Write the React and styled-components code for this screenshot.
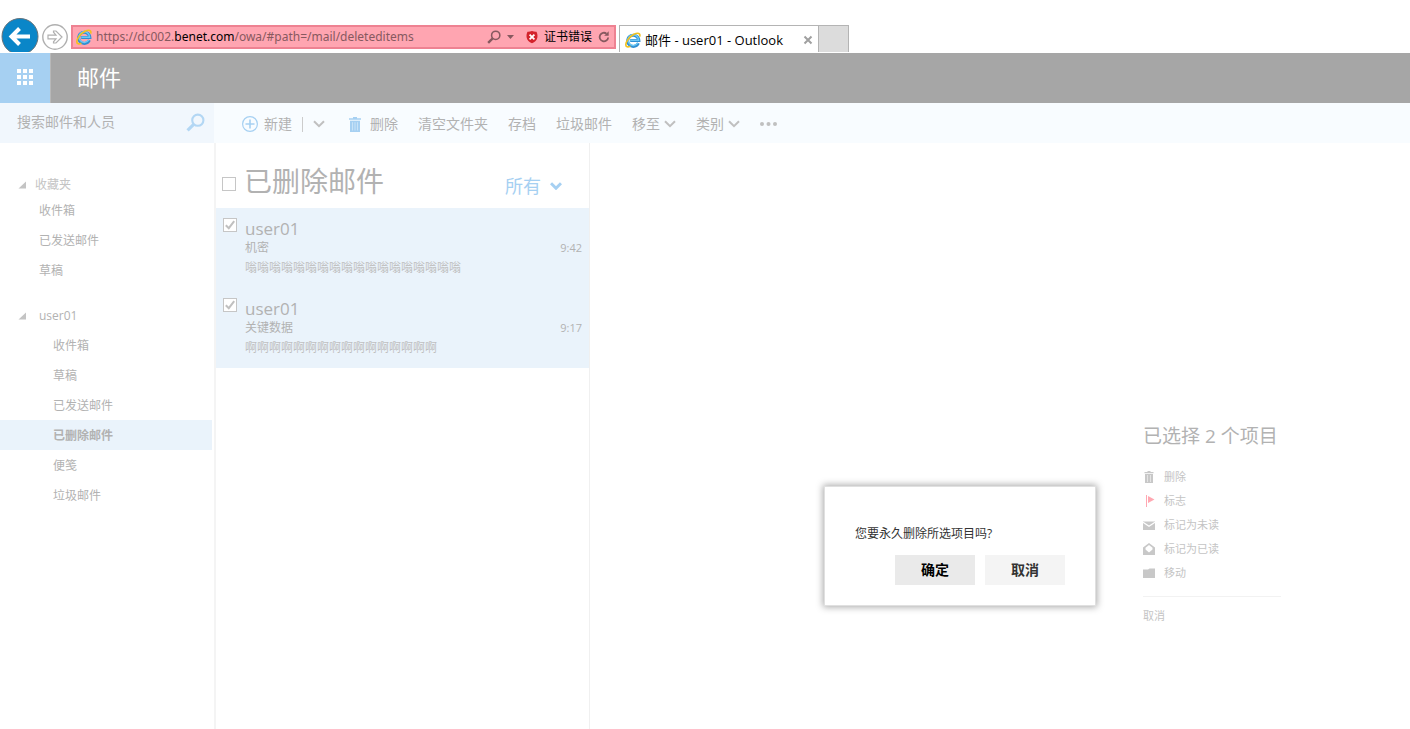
import styled, { createGlobalStyle } from "styled-components";
import { useState } from "react";

const GlobalStyle = createGlobalStyle`
  * {
    box-sizing: border-box;
  }

  body {
    margin: 0;
    background-color: #ffffff;
    color: #b2b2b2;
    font-family: "Open Sans", "Noto Sans CJK SC", sans-serif;
    font-size: 12px;
    line-height: 16px;
  }

  button {
    margin: 0;
    padding: 0;
    border: none;
    background: none;
    color: inherit;
    font: inherit;
    cursor: pointer;
  }

  svg {
    display: block;
    flex: none;
  }
`;

const StyledPage = styled.div`
  display: flex;
  flex-direction: column;
  min-height: 100vh;
`;

/* browser bar */

const StyledBrowserBar = styled.div`
  display: flex;
  align-items: flex-end;
  height: 53px;
  padding-bottom: 1px;
  overflow: hidden;
`;

const StyledBackButton = styled.button`
  height: 34px;
  margin-left: 1px;
  overflow: hidden;
`;

const StyledForwardButton = styled.button`
  margin: 0 3px 2px;
`;

const StyledAddressBar = styled.div`
  display: flex;
  align-items: center;
  flex: 0 1 545px;
  height: 24px;
  margin-bottom: 3px;
  padding: 0 4px 0 3px;
  border: 2px solid #ee8292;
  background-color: #ffa5b1;
  color: #000000;
`;

const StyledUrl = styled.div`
  flex: 1;
  margin-left: 4px;
  color: #87595f;
  font-family: "Noto Sans", sans-serif;
  line-height: 18px;
  white-space: nowrap;
  overflow: hidden;
  outline: none;

  b {
    color: #000000;
    font-weight: normal;
  }
`;

const StyledAddressTools = styled.div`
  display: flex;
  align-items: center;
  gap: 6px;
`;

const StyledTabs = styled.div`
  display: flex;
  height: 27px;
  margin-left: 3px;
`;

const StyledTab = styled.div`
  display: flex;
  align-items: center;
  width: 200px;
  padding: 1px 5px 0;
  border: 1px solid #b4b4b4;
  border-bottom: none;
  color: #000000;

  span {
    flex: 1;
    margin-left: 4px;
    font-size: 13px;
    white-space: nowrap;
  }
`;

const StyledNewTab = styled.button`
  width: 30px;
  border: 1px solid #b4b4b4;
  border-width: 1px 1px 0 0;
  background-color: #dcdcdc;
`;

/* outlook header */

const StyledHeader = styled.header`
  display: flex;
  height: 50px;
  background-color: #a6a6a6;
  color: #ffffff;
`;

const StyledAppButton = styled.button`
  display: flex;
  justify-content: center;
  width: 51px;
  padding-top: 16px;
  border-right: 1px solid #b8b8b8;
  background-color: #a6d0f2;
`;

const StyledAppTitle = styled.h1`
  margin: 0 0 0 26px;
  font-size: 22px;
  font-weight: normal;
  line-height: 48px;
`;

const StyledBar = styled.div`
  display: flex;
  height: 40px;
  background-color: #f8fcff;
`;

const StyledSearch = styled.form`
  display: flex;
  align-items: center;
  width: 214px;
  padding: 0 9px 2px 17px;
  background-color: #f1f7fd;
`;

const StyledSearchInput = styled.input`
  flex: 1;
  min-width: 0;
  padding: 0;
  border: none;
  outline: none;
  background: none;
  color: #666666;
  font: inherit;
  font-size: 14px;

  &::placeholder {
    color: #b2b2b2;
    opacity: 1;
  }
`;

const StyledToolbar = styled.div`
  display: flex;
  align-items: center;
  gap: 20px;
  margin-left: 28px;
  padding-top: 2px;
`;

const StyledToolButton = styled.button`
  display: flex;
  align-items: center;
  gap: ${(props) => props.$gap || 4}px;
  font-size: 14px;
  line-height: 20px;
  white-space: nowrap;
`;

const StyledNewGroup = styled.div`
  display: flex;
  align-items: center;
  gap: 10px;
  margin-right: 4px;
`;

const StyledDivider = styled.span`
  width: 1px;
  height: 15px;
  background-color: #cccccc;
`;

/* columns */

const StyledColumns = styled.div`
  display: flex;
  flex: 1;
`;

const StyledSidebar = styled.nav`
  flex: none;
  width: 214px;
  padding: 30px 2px 0 0;
`;

const StyledGroupTitle = styled.button`
  display: flex;
  align-items: center;
  gap: ${(props) => props.$gap}px;
  height: ${(props) => props.$height}px;
  padding: 2px 0 0 18px;
  color: ${(props) => props.$color};
`;

const StyledFolders = styled.ul`
  margin: 0 0 15px;
  padding: 0;
  list-style: none;
`;

const StyledFolder = styled.a`
  display: block;
  height: 30px;
  padding-left: ${(props) => props.$indent}px;
  background-color: ${(props) => (props.$selected ? "#eaf3fb" : "transparent")};
  color: #b2b2b2;
  font-weight: ${(props) => (props.$selected ? "bold" : "normal")};
  line-height: 32px;
  text-decoration: none;
`;

const StyledList = styled.section`
  flex: none;
  width: 376px;
  border-left: 2px solid #f4f4f4;
  border-right: 1px solid #f0f0f0;
`;

const StyledListHeader = styled.div`
  display: flex;
  align-items: center;
  height: 65px;
  padding: 17px 27px 0 6px;
`;

const StyledListTitle = styled.h2`
  flex: 1;
  margin: 0 0 0 8px;
  padding-bottom: 6px;
  font-size: 28px;
  font-weight: normal;
  line-height: 40px;
`;

const StyledFilter = styled.button`
  display: flex;
  align-items: center;
  gap: 9px;
  padding-top: 3px;
  color: #a6d0f2;
  font-size: 18px;
  line-height: 24px;
`;

const StyledCheck = styled.label`
  display: grid;
  place-items: center;
  width: 14px;
  height: 14px;

  input,
  svg {
    grid-area: 1 / 1;
  }

  input {
    appearance: none;
    width: 14px;
    height: 14px;
    margin: 0;
    border: 1px solid #c6c6c6;
    background-color: #ffffff;
  }

  svg {
    z-index: 1;
    pointer-events: none;
  }
`;

const StyledMessage = styled.article`
  display: flex;
  gap: 8px;
  height: 80px;
  padding: 10px 7px 0;
  background-color: #eaf3fb;
`;

const StyledMessageBody = styled.div`
  flex: 1;
`;

const StyledSender = styled.div`
  font-size: 17px;
  line-height: 22px;
`;

const StyledSubject = styled.div`
  display: flex;
  justify-content: space-between;
  line-height: 16px;

  time {
    font-size: 11px;
  }
`;

const StyledPreview = styled.div`
  color: #c0c0c0;
  line-height: 24px;
`;

const StyledReading = styled.main`
  position: relative;
  display: flex;
  flex: 1;
  justify-content: flex-end;
  align-items: flex-start;
  padding: 280px 129px 0 0;
`;

const StyledSelection = styled.div`
  width: 138px;
`;

const StyledSelectionTitle = styled.h2`
  margin: 0 0 16px;
  font-size: 19px;
  font-weight: normal;
  line-height: 26px;
  white-space: nowrap;
`;

const StyledAction = styled.button`
  display: flex;
  align-items: center;
  gap: 7px;
  height: 24px;
  color: #c4c4c4;
  font-size: 11px;
`;

const StyledSelectionFooter = styled.div`
  margin-top: 11px;
  padding-top: 11px;
  border-top: 1px solid #f2f2f2;
  color: #c4c4c4;
  font-size: 11px;
`;

const StyledDialog = styled.div`
  position: absolute;
  top: 343px;
  right: 314px;
  width: 272px;
  padding: 39px 30px 20px;
  border: 1px solid #e0e0e0;
  background-color: #ffffff;
  box-shadow: 0 0 7px 1px rgba(0, 0, 0, 0.35);
  color: #333333;

  p {
    margin: 0 0 13px;
  }
`;

const StyledDialogButtons = styled.div`
  display: flex;
  justify-content: flex-end;
  gap: 10px;
`;

const StyledDialogButton = styled.button`
  width: 80px;
  height: 30px;
  background-color: ${(props) => (props.$primary ? "#eaeaea" : "#f4f4f4")};
  color: ${(props) => (props.$primary ? "#000000" : "#333333")};
  font-size: 14px;
  font-weight: bold;
`;

const BackIcon = () => (
  <svg width="38" height="38" viewBox="0 0 38 38">
    <circle cx="19" cy="18.5" r="18" fill="#0a86c8" stroke="#66737b" />
    <path
      d="M29 18.5H11M18.5 10.5l-8 8 8 8"
      fill="none"
      stroke="#fff"
      strokeWidth="4"
    />
  </svg>
);

const ForwardIcon = () => (
  <svg width="26" height="26" viewBox="0 0 26 26">
    <circle cx="13" cy="13" r="12.2" fill="#fff" stroke="#b0b0b0" strokeWidth="1.4" />
    <path
      d="M6 11.2h8L11.500 8.200V7h2.500l6 6-6 6h-2.500v-1.200l2.500-3H6z"
      fill="#fff"
      stroke="#b0b0b0"
      strokeWidth="1.2"
    />
  </svg>
);

const BrowserIcon = () => (
  <svg width="16" height="16" viewBox="0 0 16 16">
    <path
      d="M13.4 11.2A5.6 5.6 0 1 1 13.9 8.6H5.2"
      fill="none"
      stroke="#2f8fd2"
      strokeWidth="3"
    />
    <path
      d="M12.8 10.9A5.3 5.3 0 1 1 13.6 8.3H5.4"
      fill="none"
      stroke="#6cc8f4"
      strokeWidth="1.5"
    />
    <path
      d="M14.600 4.600C15.800 1.400 13.200.2 9 2.200 4.600 4.400 1 9.200.8 12.600.7 15 2.800 15.400 5.400 14.200"
      fill="none"
      stroke="#f2c11f"
      strokeWidth="1.600"
    />
  </svg>
);

const SearchIcon = ({ size, color, width }) => (
  <svg width={size} height={size} viewBox="0 0 18 18">
    <circle cx="11.2" cy="6.8" r="5.3" fill="none" stroke={color} strokeWidth={width} />
    <path d="M7.3 10.7 1.5 16.5" stroke={color} strokeWidth={width + 1} />
  </svg>
);

const CaretIcon = () => (
  <svg width="7" height="4" viewBox="0 0 7 4">
    <path d="M0 0h7L3.5 4z" fill="#87595f" />
  </svg>
);

const ShieldIcon = () => (
  <svg width="12" height="14" viewBox="0 0 12 14">
    <path
      d="M1.500 1.800C3 2 4.500 1.500 6 1c1.500.5 3 1 4.500.8 1 2 1.200 4 .8 6C10.800 10.500 9 12 6 13.200 3 12 1.200 10.500.7 7.800c-.4-2-.2-4 .8-6z"
      fill="#d3222b"
    />
    <path d="m3.600 4.600 4.800 4.800m0-4.800L3.600 9.400" stroke="#fff" strokeWidth="1.800" />
  </svg>
);

const RefreshIcon = () => (
  <svg width="12" height="12" viewBox="0 0 12 12">
    <path
      d="M8.5 2.6A4.3 4.3 0 1 0 10.2 6.5"
      fill="none"
      stroke="#87595f"
      strokeWidth="1.8"
    />
    <path d="M6.2 4.8h4.5V.3z" fill="#87595f" />
  </svg>
);

const CloseIcon = () => (
  <svg width="10" height="10" viewBox="0 0 10 10">
    <path d="m1.5 1.5 7 7m0-7-7 7" stroke="#a0a0a0" strokeWidth="2" />
  </svg>
);

const WaffleIcon = () => (
  <svg width="16" height="16" viewBox="0 0 16 16" fill="#fff">
    {[0, 6, 12].map((y) =>
      [0, 6, 12].map((x) => (
        <rect key={`${x}-${y}`} x={x} y={y} width="4" height="4" />
      ))
    )}
  </svg>
);

const PlusIcon = () => (
  <svg width="16" height="16" viewBox="0 0 16 16" fill="none" stroke="#a6d0f2">
    <circle cx="8" cy="8" r="7.4" strokeWidth="1.2" />
    <path d="M8 3.5v9M3.5 8h9" strokeWidth="1.6" />
  </svg>
);

const ChevronIcon = ({ color = "#c0c0c0", width = 2 }) => (
  <svg width="12" height="8" viewBox="0 0 12 8">
    <path d="m1 1.2 5 5 5-5" fill="none" stroke={color} strokeWidth={width} />
  </svg>
);

const TrashIcon = ({ color, width, height }) => (
  <svg width={width} height={height} viewBox="0 0 12 15">
    <path d="M0 1.2h4V0h4v1.2h4v1.5H0z" fill={color} />
    <path d="M1 3.7h10V15H1z" fill={color} />
    <path d="M3.5 5.2v8.3M6 5.2v8.3M8.5 5.2v8.3" stroke="#fff" strokeOpacity="0.4" />
  </svg>
);

const DotsIcon = () => (
  <svg width="17" height="4" viewBox="0 0 17 4" fill="#c0c0c0">
    <circle cx="2" cy="2" r="2" />
    <circle cx="8.5" cy="2" r="2" />
    <circle cx="15" cy="2" r="2" />
  </svg>
);

const TriangleIcon = () => (
  <svg width="8" height="8" viewBox="0 0 8 8">
    <path d="M8 .5V7.500H.5z" fill="#c4c4c4" />
  </svg>
);

const TickIcon = () => (
  <svg width="10" height="10" viewBox="0 0 10 10">
    <path d="M.8 5.2 3.8 8.2 9.200 1.200" fill="none" stroke="#c0c0c0" strokeWidth="2" />
  </svg>
);

const FlagIcon = () => (
  <svg width="14" height="12" viewBox="0 0 14 12" fill="#ffa8b2">
    <path d="M3 0h1v12H3zM5 1l6.500 3.500L5 8z" />
  </svg>
);

const MailIcon = () => (
  <svg width="14" height="12" viewBox="0 0 14 12">
    <path d="M0 2.500h12V11H0z" fill="#c8c8c8" />
    <path d="m0 3.300 6 4 6-4" fill="none" stroke="#fff" strokeWidth="1.200" />
  </svg>
);

const OpenMailIcon = () => (
  <svg width="14" height="12" viewBox="0 0 14 12">
    <path d="M0 4.500 6 0l6 4.500V12H0z" fill="#c8c8c8" />
    <path d="M2.500 4.800 6 2l3.500 2.800v1.700L6 9.500 2.500 6.500z" fill="#fff" />
  </svg>
);

const FolderIcon = () => (
  <svg width="14" height="12" viewBox="0 0 14 12">
    <path d="M0 2.500h5l1.500-1H12V11H0z" fill="#c8c8c8" />
  </svg>
);

const SmallTrashIcon = () => (
  <svg width="14" height="12" viewBox="0 0 14 12">
    <path d="M1.500 1h3V0h3v1h3v1.200h-9zM2 3h8v9H2z" fill="#c8c8c8" />
    <path d="M4.500 4v7M7.500 4v7" stroke="#fff" strokeOpacity="0.500" />
  </svg>
);

const favorites = ["收件箱", "已发送邮件", "草稿"];
const folders = ["收件箱", "草稿", "已发送邮件", "已删除邮件", "便笺", "垃圾邮件"];

const messages = [
  { id: 1, sender: "user01", subject: "机密", time: "9:42", preview: "嗡".repeat(18) },
  { id: 2, sender: "user01", subject: "关键数据", time: "9:17", preview: "啊".repeat(16) },
];

const actions = [
  { label: "删除", icon: <SmallTrashIcon /> },
  { label: "标志", icon: <FlagIcon /> },
  { label: "标记为未读", icon: <MailIcon /> },
  { label: "标记为已读", icon: <OpenMailIcon /> },
  { label: "移动", icon: <FolderIcon /> },
];

const Check = ({ label, checked, onChange }) => (
  <StyledCheck>
    <input type="checkbox" aria-label={label} checked={checked} onChange={onChange} />
    {checked && <TickIcon />}
  </StyledCheck>
);

const BrowserBar = () => (
  <StyledBrowserBar>
    <StyledBackButton aria-label="后退">
      <BackIcon />
    </StyledBackButton>
    <StyledForwardButton aria-label="前进">
      <ForwardIcon />
    </StyledForwardButton>
    <StyledAddressBar>
      <BrowserIcon />
      <StyledUrl role="textbox" aria-label="地址" tabIndex={0}>
        https://dc002.<b>benet.com</b>/owa/#path=/mail/deleteditems
      </StyledUrl>
      <StyledAddressTools>
        <SearchIcon size={14} color="#87595f" width={2} />
        <CaretIcon />
        <span />
        <ShieldIcon />
        <span>证书错误</span>
        <RefreshIcon />
      </StyledAddressTools>
    </StyledAddressBar>
    <StyledTabs>
      <StyledTab>
        <BrowserIcon />
        <span>邮件 - user01 - Outlook</span>
        <button aria-label="关闭">
          <CloseIcon />
        </button>
      </StyledTab>
      <StyledNewTab aria-label="新建标签页" />
    </StyledTabs>
  </StyledBrowserBar>
);

const Toolbar = () => (
  <StyledToolbar>
    <StyledNewGroup>
      <StyledToolButton $gap={6}>
        <PlusIcon />
        新建
      </StyledToolButton>
      <StyledDivider />
      <StyledToolButton aria-label="更多新建选项">
        <ChevronIcon />
      </StyledToolButton>
    </StyledNewGroup>
    <StyledToolButton $gap={9}>
      <TrashIcon color="#a6d0f2" width={12} height={15} />
      删除
    </StyledToolButton>
    <StyledToolButton>清空文件夹</StyledToolButton>
    <StyledToolButton>存档</StyledToolButton>
    <StyledToolButton>垃圾邮件</StyledToolButton>
    <StyledToolButton>
      移至
      <ChevronIcon />
    </StyledToolButton>
    <StyledToolButton>
      类别
      <ChevronIcon />
    </StyledToolButton>
    <StyledToolButton aria-label="更多">
      <DotsIcon />
    </StyledToolButton>
  </StyledToolbar>
);

const App = () => {
  const [selected, setSelected] = useState([1, 2]);
  const [search, setSearch] = useState("");
  const [confirming, setConfirming] = useState(true);

  const toggle = (id) => {
    setSelected((ids) =>
      ids.includes(id) ? ids.filter((i) => i !== id) : [...ids, id]
    );
  };

  return (
    <StyledPage>
      <GlobalStyle />
      <BrowserBar />
      <StyledHeader>
        <StyledAppButton aria-label="应用">
          <WaffleIcon />
        </StyledAppButton>
        <StyledAppTitle>邮件</StyledAppTitle>
      </StyledHeader>
      <StyledBar>
        <StyledSearch onSubmit={(e) => e.preventDefault()}>
          <StyledSearchInput
            aria-label="搜索邮件和人员"
            placeholder="搜索邮件和人员"
            value={search}
            onChange={(e) => setSearch(e.target.value)}
          />
          <button aria-label="搜索">
            <SearchIcon size={19} color="#b3d7f4" width={2} />
          </button>
        </StyledSearch>
        <Toolbar />
      </StyledBar>
      <StyledColumns>
        <StyledSidebar>
          <StyledGroupTitle $gap={9} $height={22} $color="#c4c4c4">
            <TriangleIcon />
            收藏夹
          </StyledGroupTitle>
          <StyledFolders>
            {favorites.map((name) => (
              <li key={name}>
                <StyledFolder href="#" $indent={39}>
                  {name}
                </StyledFolder>
              </li>
            ))}
          </StyledFolders>
          <StyledGroupTitle $gap={13} $height={30} $color="#b2b2b2">
            <TriangleIcon />
            user01
          </StyledGroupTitle>
          <StyledFolders>
            {folders.map((name) => (
              <li key={name}>
                <StyledFolder href="#" $indent={53} $selected={name === "已删除邮件"}>
                  {name}
                </StyledFolder>
              </li>
            ))}
          </StyledFolders>
        </StyledSidebar>
        <StyledList>
          <StyledListHeader>
            <Check
              label="全选"
              checked={false}
              onChange={() => setSelected(messages.map((m) => m.id))}
            />
            <StyledListTitle>已删除邮件</StyledListTitle>
            <StyledFilter>
              所有
              <ChevronIcon color="#a6d0f2" width={3} />
            </StyledFilter>
          </StyledListHeader>
          {messages.map((message) => (
            <StyledMessage key={message.id}>
              <Check
                label={message.subject}
                checked={selected.includes(message.id)}
                onChange={() => toggle(message.id)}
              />
              <StyledMessageBody>
                <StyledSender>{message.sender}</StyledSender>
                <StyledSubject>
                  {message.subject}
                  <time>{message.time}</time>
                </StyledSubject>
                <StyledPreview>{message.preview}</StyledPreview>
              </StyledMessageBody>
            </StyledMessage>
          ))}
        </StyledList>
        <StyledReading>
          <StyledSelection>
            <StyledSelectionTitle>已选择 {selected.length} 个项目</StyledSelectionTitle>
            {actions.map((action) => (
              <StyledAction key={action.label}>
                {action.icon}
                {action.label}
              </StyledAction>
            ))}
            <StyledSelectionFooter>
              <button onClick={() => setSelected([])}>取消</button>
            </StyledSelectionFooter>
          </StyledSelection>
          {confirming && (
            <StyledDialog role="dialog" aria-label="永久删除">
              <p>您要永久删除所选项目吗?</p>
              <StyledDialogButtons>
                <StyledDialogButton $primary onClick={() => setConfirming(false)}>
                  确定
                </StyledDialogButton>
                <StyledDialogButton onClick={() => setConfirming(false)}>
                  取消
                </StyledDialogButton>
              </StyledDialogButtons>
            </StyledDialog>
          )}
        </StyledReading>
      </StyledColumns>
    </StyledPage>
  );
};

export default App;
